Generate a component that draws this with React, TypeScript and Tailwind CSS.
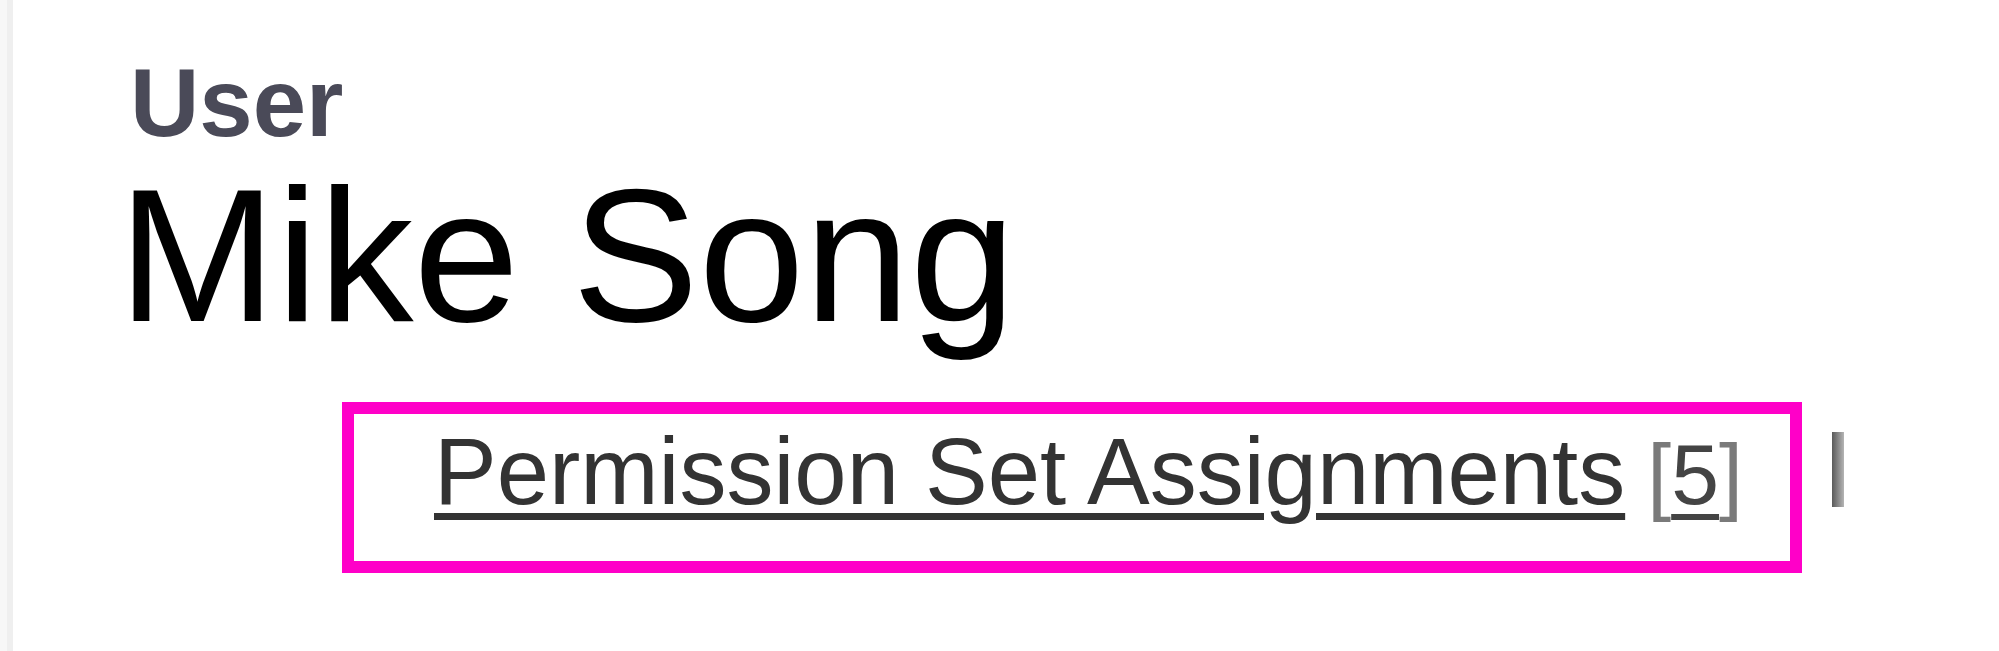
export default function App() {
  return (
    <div className="flex h-[651px] w-full bg-white font-['Liberation_Sans',Arial,sans-serif]">
      {/* left rail */}
      <div className="w-[7px] shrink-0 bg-[#f7f7f7]" />
      <div className="w-[6px] shrink-0 bg-[#efefef]" />

      <div className="flex flex-col items-start">
        {/* record type */}
        <div className="ml-[117px] mt-[55px] text-[96px] font-bold leading-none text-[#4a4a58]">
          User
        </div>

        {/* record name */}
        <h1 className="ml-[105px] mt-[9px] text-[190px] font-normal leading-none text-black">
          Mike Song
        </h1>

        {/* related list links */}
        <div className="ml-[329px] mt-[52px] flex items-start">
          <div className="h-[171px] w-[1460px] border-[12px] border-[#ff00c8] pl-[80px] pt-[11px]">
            <a className="text-[94px] leading-none whitespace-nowrap text-[#333333]">
              <span className="underline decoration-[7px] underline-offset-[9px]">
                Permission Set Assignments
              </span>{" "}
              <span className="ml-[-4px] text-[86px] text-[#7a7a7a]">
                [<span className="text-[#444444] underline decoration-[6px] underline-offset-[10px]">5</span>]
              </span>
            </a>
          </div>

          <div className="ml-[30px] mt-[30px] h-[75px] w-[12px] bg-gradient-to-r from-[#5a5a5a] to-[#b5b5b5]" />
        </div>
      </div>
    </div>
  );
}
